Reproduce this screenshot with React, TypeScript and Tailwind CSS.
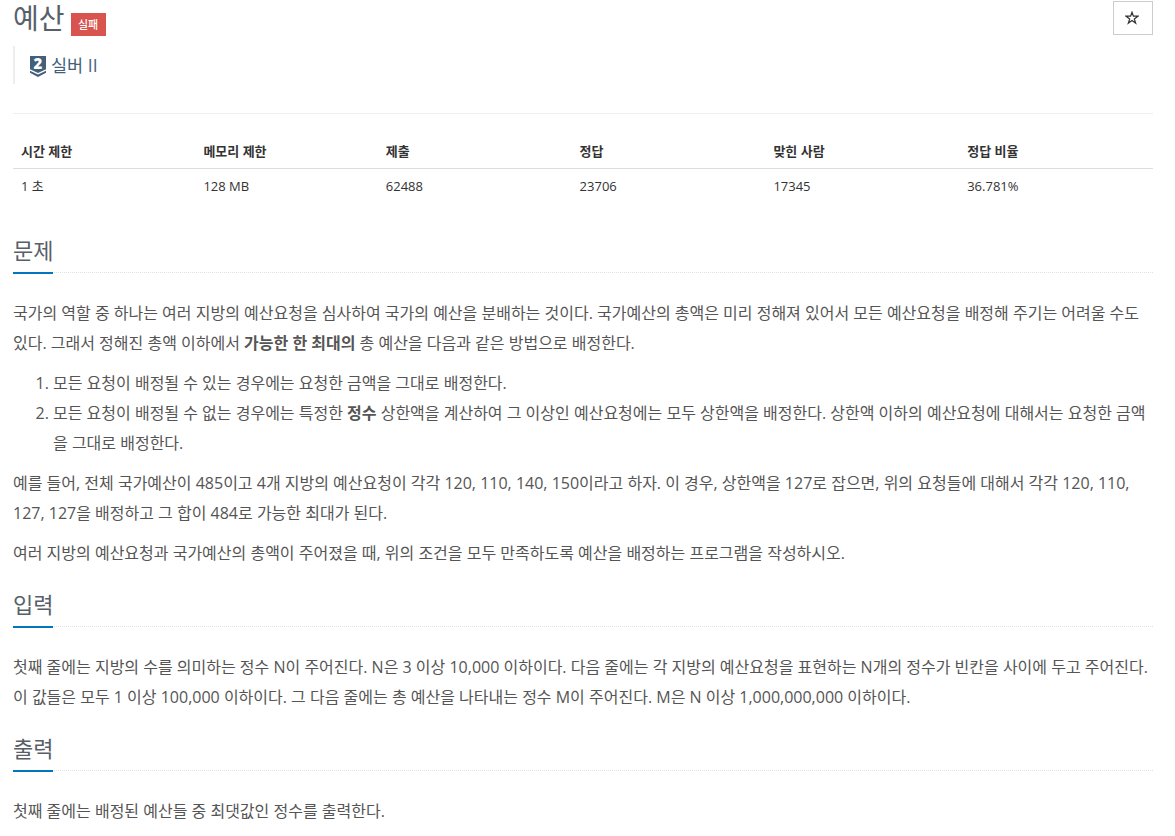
import type { ReactNode } from "react";

const stats = [
  { label: "시간 제한", value: "1 초", width: "w-[16%]" },
  { label: "메모리 제한", value: "128 MB", width: "w-[16%]" },
  { label: "제출", value: "62488", width: "w-[17%]" },
  { label: "정답", value: "23706", width: "w-[17%]" },
  { label: "맞힌 사람", value: "17345", width: "w-[17%]" },
  { label: "정답 비율", value: "36.781%", width: "w-[17%]" },
];

function TierBadge() {
  return (
    <svg width="16" height="21" viewBox="0 0 16 21" className="mt-[3px] mr-[5px] overflow-visible">
      <path d="M0 0h16v13.3l-8 3.7-8-3.7z" fill="#435f7a" />
      <path d="M0 14.8l8 3.7 8-3.7v2l-8 4.2-8-4.2z" fill="#435f7a" />
      <text
        x="8"
        y="13"
        textAnchor="middle"
        fontSize="15"
        fontWeight="800"
        fill="#fff"
        fontFamily="'Open Sans', sans-serif"
      >
        2
      </text>
    </svg>
  );
}

function Section({ title, children }: { title: string; children: ReactNode }) {
  return (
    <section>
      <div className="h-[39px] border-b border-dotted border-[#dce4ec]">
        <h2 className="inline-block h-10 border-b-2 border-[#0076c0] text-[22px] leading-[33px] text-[#585f69]">
          {title}
        </h2>
      </div>
      <div className="pt-[25px] text-base leading-[30px] text-[#555]">{children}</div>
    </section>
  );
}

export default function App() {
  return (
    <main className="h-[836px] w-[1175px] overflow-hidden bg-white pl-[13px] pr-[22px] font-['Open_Sans','Noto_Sans_CJK_KR',sans-serif] text-[#333]">
      <header className="flex h-[46px] items-start justify-between">
        <div className="flex items-start">
          <h1 className="text-[28px] leading-[37px] text-[#585f69]">예산</h1>
          <span className="ml-1.5 mt-[13px] flex h-[23px] w-[35px] items-center justify-center bg-[#d9534f] text-[11px] leading-none font-medium text-white">
            실패
          </span>
        </div>
        <button className="mt-px flex h-[34px] w-10 items-center justify-center border border-[#ccc] text-[#333]">
          <svg width="14" height="14" viewBox="0 0 14 14" fill="none" stroke="currentColor" strokeWidth="1.2" className="-ml-[3px] -mt-px">
            <path d="M7 1.2l1.4 4h4.6L9.3 7.9l1.4 4.3L7 9.6l-3.7 2.6 1.4-4.3L1 5.2h4.6z" />
          </svg>
        </button>
      </header>

      <blockquote className="flex h-[38px] items-center border-l-2 border-[#eee] pl-[15px] text-[17.5px] text-[#435f7a]">
        <TierBadge />
        실버 II
      </blockquote>

      <div className="mt-[29px] border-t border-[#eee] pt-[18px]">
        <table className="w-[1140px] table-fixed text-[13px]">
          <thead>
            <tr className="h-9 border-b border-[#ddd]">
              {stats.map((s) => (
                <th key={s.label} className={`${s.width} px-2 pt-[3px] text-left font-bold`}>
                  {s.label}
                </th>
              ))}
            </tr>
          </thead>
          <tbody>
            <tr className="h-9">
              {stats.map((s) => (
                <td key={s.label} className="px-2">
                  {s.value}
                </td>
              ))}
            </tr>
          </tbody>
        </table>
      </div>

      <div className="mt-[30px] flex flex-col gap-5">
        <Section title="문제">
          <p className="mb-[10px]">
            국가의 역할 중 하나는 여러 지방의 예산요청을 심사하여 국가의 예산을 분배하는 것이다. 국가예산의 총액은 미리
            정해져 있어서 모든 예산요청을 배정해 주기는 어려울 수도 있다. 그래서 정해진 총액 이하에서{" "}
            <strong>가능한 한 최대의</strong> 총 예산을 다음과 같은 방법으로 배정한다.
          </p>
          <ol className="mb-[10px] list-decimal pl-10">
            <li>모든 요청이 배정될 수 있는 경우에는 요청한 금액을 그대로 배정한다.</li>
            <li>
              모든 요청이 배정될 수 없는 경우에는 특정한 <strong>정수</strong> 상한액을 계산하여 그 이상인 예산요청에는
              모두 상한액을 배정한다. 상한액 이하의 예산요청에 대해서는 요청한 금액을 그대로 배정한다.
            </li>
          </ol>
          <p className="mb-[10px]">
            예를 들어, 전체 국가예산이 485이고 4개 지방의 예산요청이 각각 120, 110, 140, 150이라고 하자. 이 경우,
            상한액을 127로 잡으면, 위의 요청들에 대해서 각각 120, 110, 127, 127을 배정하고 그 합이 484로 가능한 최대가
            된다.
          </p>
          <p>
            여러 지방의 예산요청과 국가예산의 총액이 주어졌을 때, 위의 조건을 모두 만족하도록 예산을 배정하는 프로그램을
            작성하시오.
          </p>
        </Section>
        <Section title="입력">
          <p>
            첫째 줄에는 지방의 수를 의미하는 정수 N이 주어진다. N은 3 이상 10,000 이하이다. 다음 줄에는 각 지방의
            예산요청을 표현하는 N개의 정수가 빈칸을 사이에 두고 주어진다. 이 값들은 모두 1 이상 100,000 이하이다. 그 다음
            줄에는 총 예산을 나타내는 정수 M이 주어진다. M은 N 이상 1,000,000,000 이하이다.
          </p>
        </Section>
        <Section title="출력">
          <p>첫째 줄에는 배정된 예산들 중 최댓값인 정수를 출력한다.</p>
        </Section>
      </div>
    </main>
  );
}
